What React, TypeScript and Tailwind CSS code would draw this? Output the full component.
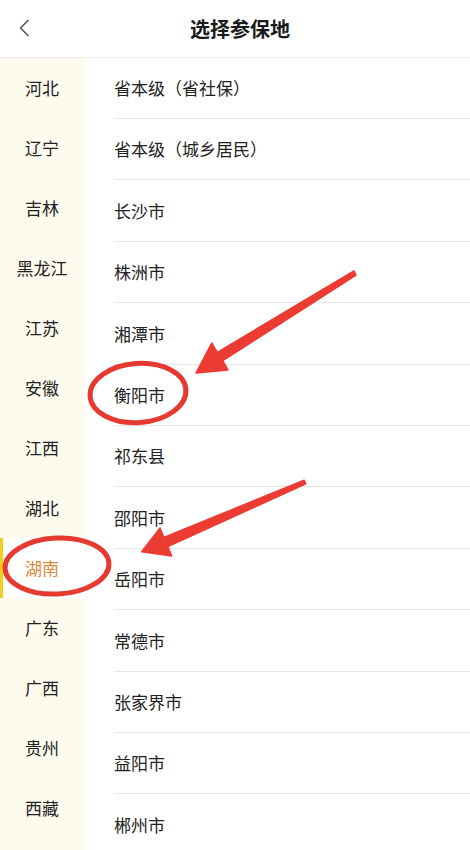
const provinces = ["河北", "辽宁", "吉林", "黑龙江", "江苏", "安徽", "江西", "湖北", "湖南", "广东", "广西", "贵州", "西藏"];
const cities = [
  "省本级（省社保）",
  "省本级（城乡居民）",
  "长沙市",
  "株洲市",
  "湘潭市",
  "衡阳市",
  "祁东县",
  "邵阳市",
  "岳阳市",
  "常德市",
  "张家界市",
  "益阳市",
  "郴州市",
];

export default function App() {
  const active = "湖南";
  return (
    <div
      className="relative h-[850px] w-[470px] overflow-hidden bg-white text-[#222]"
      style={{ fontFamily: '"Noto Sans CJK SC", "Noto Sans", sans-serif' }}
    >
      {/* Header */}
      <header className="relative flex h-[58px] items-center justify-center border-b border-[#ececec] pl-[10px]">
        <button className="absolute left-[14px] top-[16px] flex h-[24px] w-[20px] items-center justify-center text-[#555]">
          <svg width="12" height="18" viewBox="0 0 12 18" fill="none">
            <path d="M10 1.5L2.5 9l7.5 7.5" stroke="currentColor" strokeWidth="1.6" strokeLinecap="round" strokeLinejoin="round" />
          </svg>
        </button>
        <h1 className="text-[20px] font-bold text-[#1a1a1a]">选择参保地</h1>
      </header>

      <div className="flex">
        {/* Province sidebar */}
        <aside className="w-[84px] shrink-0 bg-[#fdfbee]">
          {provinces.map((p) => (
            <div
              key={p}
              className={
                p === active
                  ? "flex h-[60px] items-center justify-center border-l-[3px] border-[#f2d019] bg-white pr-[3px] text-[17px] text-[#d9893c]"
                  : "flex h-[60px] items-center justify-center text-[17px] text-[#222]"
              }
            >
              {p}
            </div>
          ))}
        </aside>

        {/* City list */}
        <ul className="flex-1 pl-[30px]">
          {cities.map((c) => (
            <li
              key={c}
              className="box-border flex h-[61.4px] items-center border-b border-[#e6e6e6] text-[17px] first:h-[61px]"
            >
              {c}
            </li>
          ))}
        </ul>
      </div>

      {/* Red annotations */}
      <svg className="pointer-events-none absolute left-0 top-0" width="470" height="850" viewBox="0 0 470 850">
        <ellipse cx="138" cy="393" rx="48" ry="29.5" fill="none" stroke="#e63a30" strokeWidth="5" transform="rotate(-4 138 393)" />
        <ellipse cx="57" cy="566" rx="52" ry="28" fill="none" stroke="#e63a30" strokeWidth="5" transform="rotate(-3 57 566)" />
        <polygon
          points="356,275 222.7,360.7 228,370 196,373 211.7,343 217.3,352.3 354,271"
          fill="#ec3b33"
          strokeLinejoin="round"
          stroke="#ec3b33"
          strokeWidth="1.5"
        />
        <polygon
          points="305.8,483.8 167.8,546.6 171.7,556 141.7,551.7 160,528 163.8,537.4 304.2,480.2"
          fill="#ec3b33"
          strokeLinejoin="round"
          stroke="#ec3b33"
          strokeWidth="1.5"
        />
      </svg>
    </div>
  );
}
